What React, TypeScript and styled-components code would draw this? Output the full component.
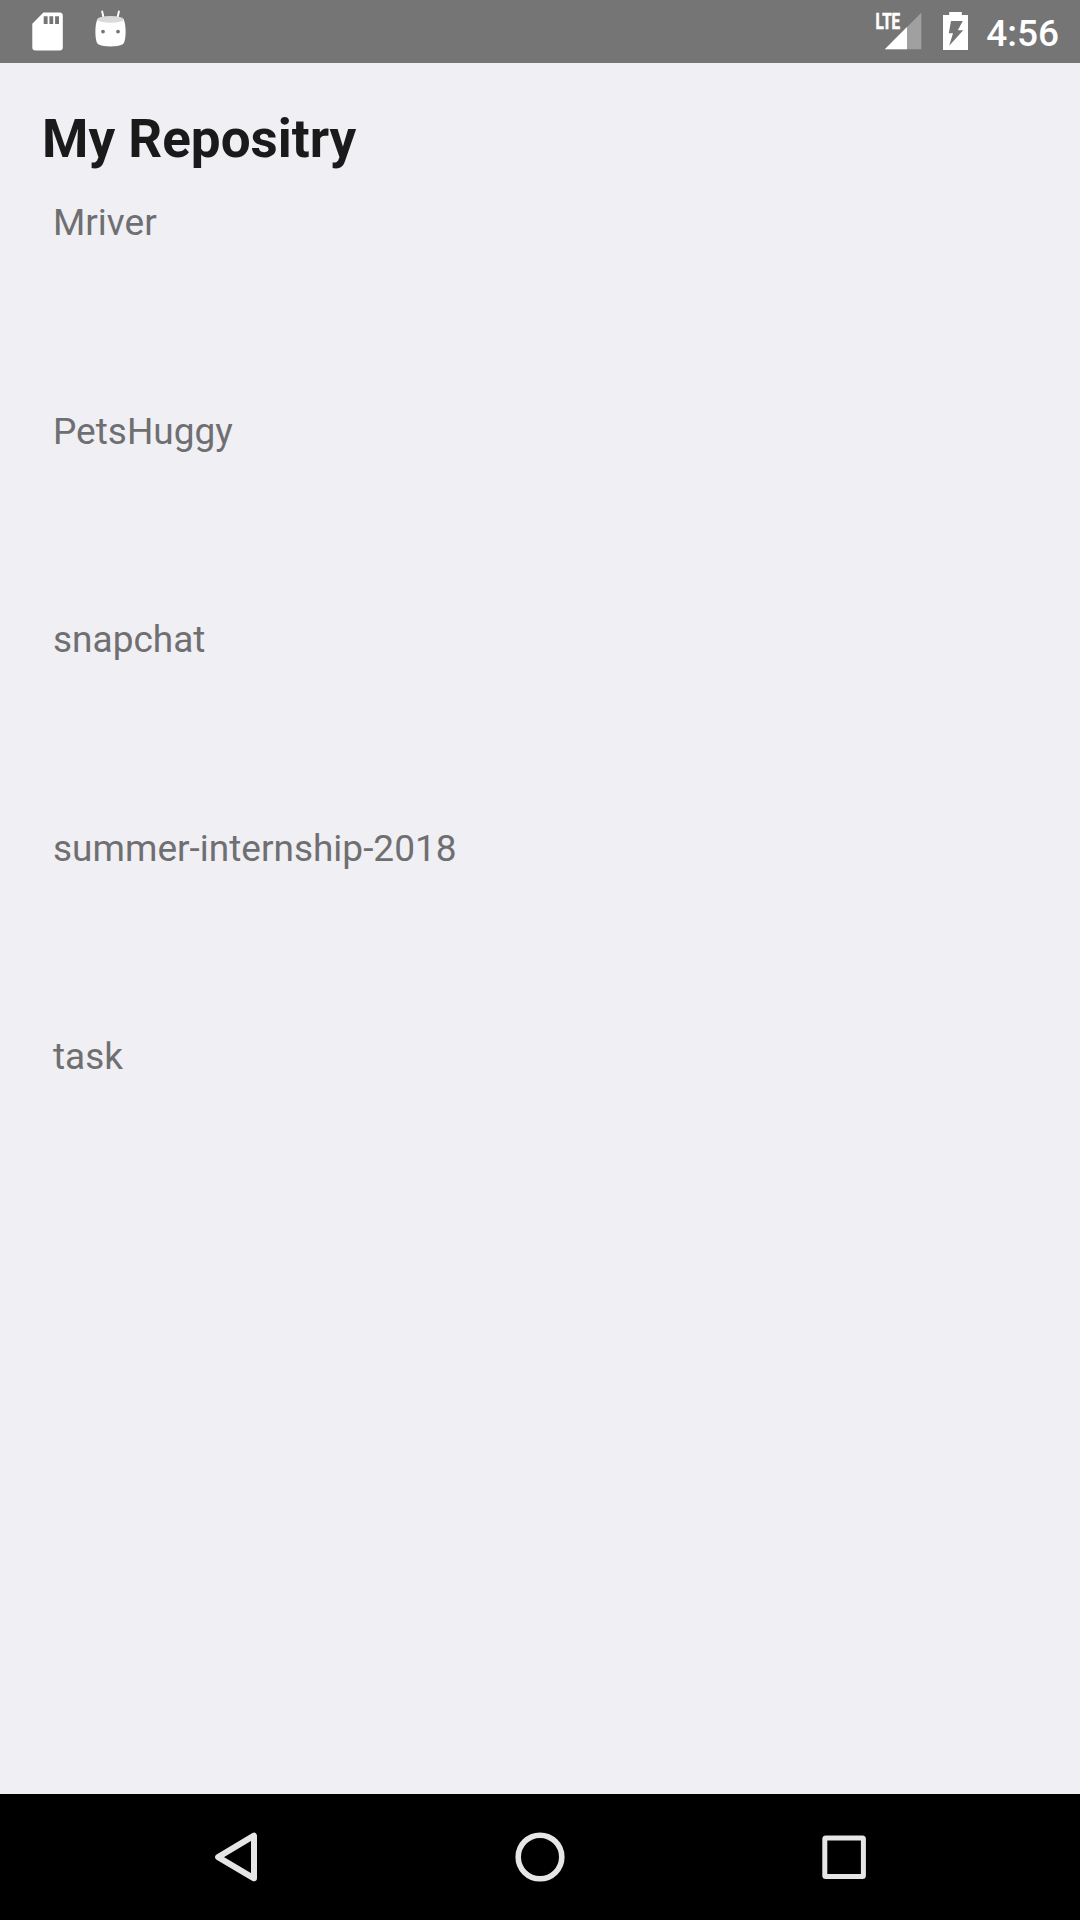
import React from "react";
import styled, { createGlobalStyle } from "styled-components";

const GlobalStyle = createGlobalStyle`
  * { box-sizing: border-box; }
  body { margin: 0; background: #efeff4; font-family: Roboto, sans-serif; }
  h1, ul { margin: 0; padding: 0; }
`;

const Screen = styled.div`
  display: flex;
  flex-direction: column;
  width: 1080px;
  height: 1920px;
  background: #efeff4;
  overflow: hidden;
`;

const StatusBar = styled.header`
  flex: none;
  display: flex;
  justify-content: space-between;
  height: 63px;
  padding: 0 21px 0 16px;
  background: #757575;
`;

const IconGroup = styled.div<{ $gap: number }>`
  display: flex;
  gap: ${({ $gap }) => $gap}px;
`;

const StatusIcon = styled.svg`
  display: block;
  flex: none;
  height: 63px;
`;

const Clock = styled.time`
  flex: none;
  width: 90px;
  text-align: right;
  font-size: 37px;
  font-weight: 500;
  line-height: 67px;
  color: #fff;
`;

const Content = styled.main`
  flex: 1;
  padding: 45px 42px 0;
`;

const Title = styled.h1`
  margin-bottom: 31px;
  font-size: 53px;
  font-weight: 700;
  line-height: 62px;
  color: #1a1a1a;
`;

const RepositoryList = styled.ul`
  list-style: none;
  padding-left: 11px;
`;

const RepositoryItem = styled.li`
  height: 208.6px;
  font-size: 37px;
  line-height: 43px;
  color: #6f6f71;
`;

const NavigationBar = styled.nav`
  flex: none;
  display: flex;
  justify-content: center;
  gap: 178px;
  height: 126px;
  background: #000;
`;

const NavButton = styled.button`
  width: 126px;
  height: 126px;
  padding: 0;
  border: 0;
  background: none;
`;

const NavIcon = styled.svg`
  display: block;
  fill: none;
  stroke: #e6e6e6;
  stroke-linejoin: round;
`;

const repositories = ["Mriver", "PetsHuggy", "snapchat", "summer-internship-2018", "task"];

const SdCardIcon = () => (
  <StatusIcon width="63" viewBox="16 0 63 63">
    <path
      fill="#fff"
      fillRule="evenodd"
      d="M43.4 12.5H59.5a3.3 3.3 0 0 1 3.3 3.3V47.3a3.3 3.3 0 0 1-3.3 3.3H35.6a3.3 3.3 0 0 1-3.3-3.3V23.8ZM43.7 16.3V24H47.6V16.3ZM49.4 16.3V24H53.2V16.3ZM55.1 16.3V24H59V16.3Z"
    />
  </StatusIcon>
);

const AndroidIcon = () => (
  <StatusIcon width="63" viewBox="79 0 63 63">
    <path d="M102.2 11.5 103.8 19M118.9 11.5 117.2 19" stroke="#fff" strokeWidth="1.9" strokeLinecap="round" />
    <path
      fill="#fff"
      d="M97.5 19C95.9 22 95.3 27.5 95.4 32.5C95.5 38 96.4 43 98.2 44.2C104 47.2 117 47.2 122.8 44.2C124.6 43 125.5 38 125.6 32.5C125.7 27.5 125.1 22 123.5 19Z"
    />
    <ellipse cx="110.5" cy="19.4" rx="13.1" ry="3.3" fill="#dadada" />
    <circle cx="103" cy="31.6" r="1.9" fill="#757575" />
    <circle cx="118" cy="31.6" r="1.9" fill="#757575" />
  </StatusIcon>
);

const SignalIcon = () => (
  <StatusIcon width="50" viewBox="873 0 50 63">
    <path d="M921.3 12.8V49.2H884.8Z" fill="#a0a0a0" />
    <path d="M907 27.1V49.2H884.8Z" fill="#fff" />
    <text
      x="875.6"
      y="29"
      fill="#fff"
      stroke="#fff"
      strokeWidth="0.6"
      fontFamily="Roboto, sans-serif"
      fontSize="21.4"
      fontWeight="700"
      textLength="24.6"
      lengthAdjust="spacingAndGlyphs"
    >
      LTE
    </text>
  </StatusIcon>
);

const BatteryIcon = () => (
  <StatusIcon width="27" viewBox="942 0 27 63">
    <path d="M949.2 12.1H961.8V15H968V50H943V15H949.2Z" fill="#fff" />
    <path d="M951 21H962.8L957.8 30.2H963.2L949.2 45.8L953 33.2H948.8Z" fill="#757575" />
  </StatusIcon>
);

export default function App() {
  return (
    <>
      <GlobalStyle />
      <Screen>
        <StatusBar>
          <IconGroup $gap={0}>
            <SdCardIcon />
            <AndroidIcon />
          </IconGroup>
          <IconGroup $gap={0}>
            <IconGroup $gap={19}>
              <SignalIcon />
              <BatteryIcon />
            </IconGroup>
            <Clock>4:56</Clock>
          </IconGroup>
        </StatusBar>
        <Content>
          <Title>My Repositry</Title>
          <RepositoryList>
            {repositories.map((name) => (
              <RepositoryItem key={name}>{name}</RepositoryItem>
            ))}
          </RepositoryList>
        </Content>
        <NavigationBar>
          <NavButton aria-label="Back">
            <NavIcon width="126" height="126" viewBox="173 0 126 126">
              <path d="M254 41.7V84.3L218.1 63.1Z" strokeWidth="6" />
            </NavIcon>
          </NavButton>
          <NavButton aria-label="Home">
            <NavIcon width="126" height="126">
              <circle cx="63" cy="63" r="21.8" strokeWidth="5.6" />
            </NavIcon>
          </NavButton>
          <NavButton aria-label="Recent apps">
            <NavIcon width="126" height="126" viewBox="781 0 126 126">
              <rect x="824.8" y="44" width="38.6" height="38.4" rx="1" strokeWidth="5" />
            </NavIcon>
          </NavButton>
        </NavigationBar>
      </Screen>
    </>
  );
}
